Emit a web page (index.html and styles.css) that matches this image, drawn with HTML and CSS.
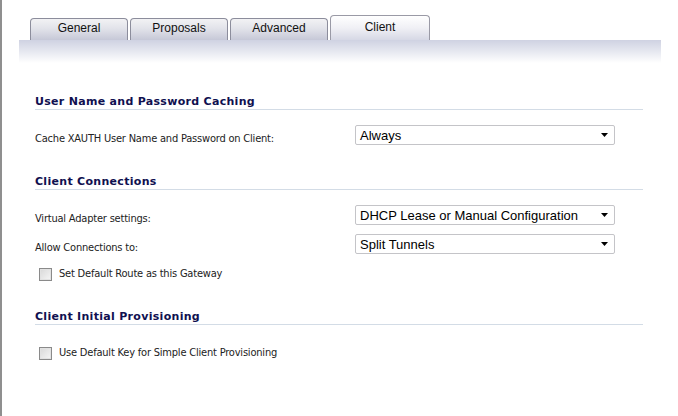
FILE: index.html
```html
<!DOCTYPE html>
<html>
<head>
<meta charset="utf-8">
<link rel="stylesheet" href="styles.css">
</head>
<body>
<div class="page">
  <div class="tabbar">
    <div class="tabs">
      <div class="tab">General</div>
      <div class="tab">Proposals</div>
      <div class="tab">Advanced</div>
      <div class="tab active">Client</div>
    </div>
    <div class="band"></div>
  </div>

  <div class="content">
    <div class="section first">
      <div class="heading">User Name and Password Caching</div>
      <div class="row">
        <div class="label">Cache XAUTH User Name and Password on Client:</div>
        <div class="select"><span>Always</span><svg class="arrow" width="7" height="4" viewBox="0 0 7 4"><path d="M0 0h7L3.5 4z" fill="#000"/></svg></div>
      </div>
    </div>

    <div class="section">
      <div class="heading">Client Connections</div>
      <div class="row">
        <div class="label">Virtual Adapter settings:</div>
        <div class="select"><span>DHCP Lease or Manual Configuration</span><svg class="arrow" width="7" height="4" viewBox="0 0 7 4"><path d="M0 0h7L3.5 4z" fill="#000"/></svg></div>
      </div>
      <div class="row tight">
        <div class="label">Allow Connections to:</div>
        <div class="select"><span>Split Tunnels</span><svg class="arrow" width="7" height="4" viewBox="0 0 7 4"><path d="M0 0h7L3.5 4z" fill="#000"/></svg></div>
      </div>
      <div class="check-row">
        <span class="checkbox"></span>
        <span class="check-label">Set Default Route as this Gateway</span>
      </div>
    </div>

    <div class="section last">
      <div class="heading">Client Initial Provisioning</div>
      <div class="check-row solo">
        <span class="checkbox"></span>
        <span class="check-label">Use Default Key for Simple Client Provisioning</span>
      </div>
    </div>
  </div>
</div>
</body>
</html>
```

FILE: styles.css
```css
html, body {
  margin: 0;
  padding: 0;
  background: #ffffff;
}

.page {
  height: 416px;
  box-sizing: border-box;
  border-left: 2px solid #8f8f8f;
  padding-top: 15px;
  font-family: "DejaVu Sans Condensed", "DejaVu Sans", sans-serif;
  font-size: 11px;
  letter-spacing: -0.2px;
  color: #222;
}

.tabbar {
  margin-left: 17px;
  width: 642px;
}

.tabs {
  display: flex;
  align-items: flex-end;
  gap: 2px;
  padding-left: 11px;
  height: 25px;
}

.tab {
  box-sizing: border-box;
  width: 98px;
  height: 22px;
  border: 1px solid #8c8d9c;
  border-bottom: none;
  border-radius: 4px 4px 0 0;
  background: linear-gradient(#f2f2f4, #e2e3ea 45%, #c6c8d7);
  font-family: "Liberation Sans", Arial, sans-serif;
  font-size: 12px;
  letter-spacing: 0;
  color: #111;
  text-align: center;
  line-height: 19px;
}

.tab.active {
  width: 100px;
  height: 25px;
  border-color: #9a9aa6;
  background: linear-gradient(#ffffff, #f0f0f5 50%, #d6d8e5);
  line-height: 23px;
}

.band {
  height: 23px;
  background: linear-gradient(#cfd2e2, #e6e8f0 50%, #ffffff);
}

.content {
  margin-left: 33px;
  width: 608px;
}

.section {
  margin-top: 29px;
}

.section.first {
  margin-top: 32px;
}

.section.last {
  margin-top: 29px;
}

.heading {
  font-family: "DejaVu Sans", Verdana, sans-serif;
  font-weight: bold;
  font-size: 11px;
  letter-spacing: 0.3px;
  line-height: 14px;
  color: #101050;
  border-bottom: 1px solid #d3dce6;
}

.row {
  display: flex;
  align-items: flex-start;
  margin-top: 15px;
}

.section.first .row {
  margin-top: 15px;
}

.row.tight {
  margin-top: 8px;
}

.label {
  width: 320px;
  line-height: 14px;
  margin-top: 7px;
}

.select {
  box-sizing: border-box;
  width: 260px;
  height: 20px;
  border: 1px solid #c4c4c8;
  border-radius: 2px;
  background: #fff;
  display: flex;
  align-items: center;
  justify-content: space-between;
  padding: 0 6px 0 4px;
  font-family: "Liberation Sans", Arial, sans-serif;
  font-size: 13px;
  letter-spacing: 0;
  color: #000;
}

.arrow {
  display: block;
}

.check-row {
  display: flex;
  align-items: center;
  gap: 7px;
  margin-top: 12px;
  padding-left: 4px;
}

.check-row.solo {
  margin-top: 21px;
}

.checkbox {
  box-sizing: border-box;
  width: 13px;
  height: 13px;
  border: 1px solid #8a8a8a;
  background: linear-gradient(135deg, #d8d8d8, #f6f6f6);
  box-shadow: inset 0 0 0 1px #e2e2e2;
}

.check-label {
  line-height: 14px;
}
```
